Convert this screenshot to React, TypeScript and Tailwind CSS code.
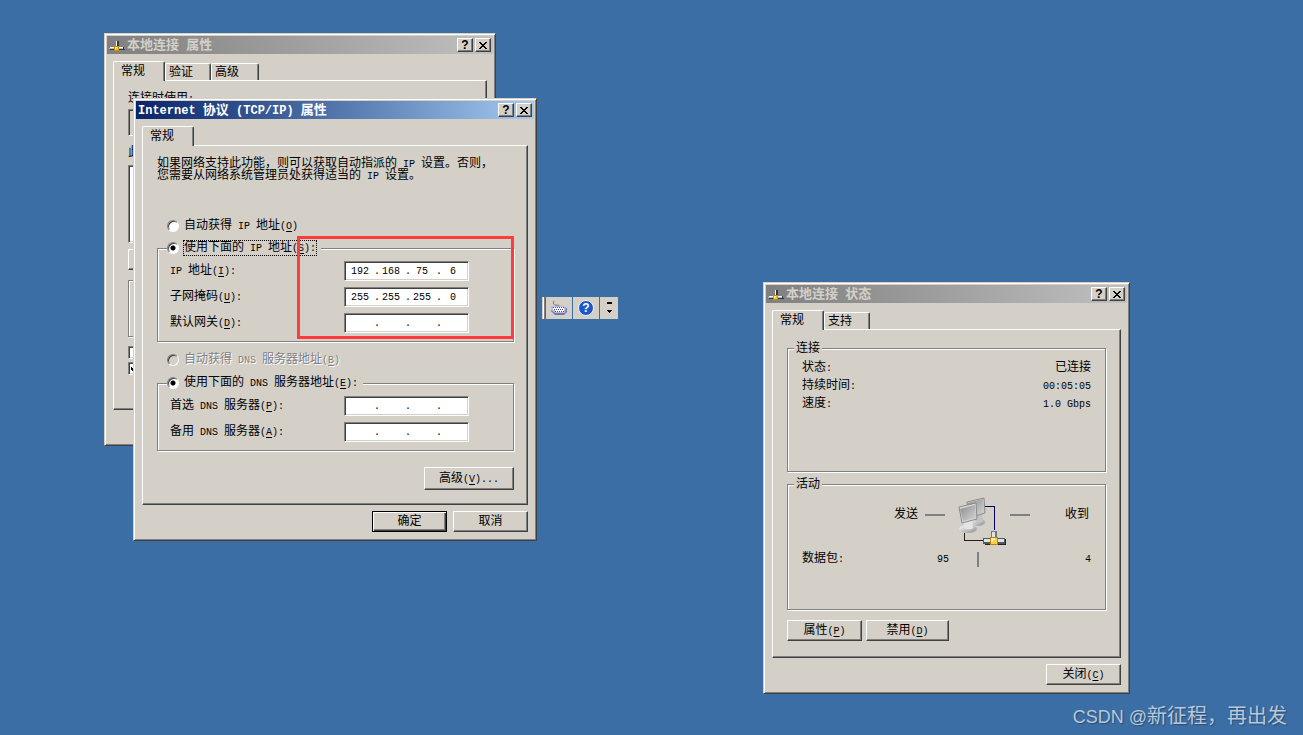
import { useState } from 'react';
import type { ReactNode } from 'react';
import clsx from 'clsx';

const RAISED =
  'bg-[#d4d0c8] border border-t-white border-l-white border-b-[#404040] border-r-[#404040] shadow-[inset_-1px_-1px_0_#808080]';
const SUNKEN =
  'border border-t-[#808080] border-l-[#808080] border-b-white border-r-white shadow-[inset_1px_1px_0_#404040,inset_-1px_-1px_0_#d4d0c8]';

type TextProps = {
  children: string;
  accel?: string;
  suffix?: string;
  latin?: string;
};

// latin runs are half the width of a chinese character
function Text({ children, accel, suffix = '', latin = 'text-[10px] leading-none' }: TextProps) {
  return (
    <span className="whitespace-pre">
      {children.split(/([\x20-\x7e]+)/).map((part, i) =>
        i % 2 ? (
          <span key={i} className={latin}>
            {part}
          </span>
        ) : (
          part
        ),
      )}
      {accel && (
        <span className={latin}>
          (<u className="underline-offset-2">{accel}</u>)
        </span>
      )}
      {suffix && <span className={latin}>{suffix}</span>}
    </span>
  );
}

function NetworkIcon() {
  return (
    <svg width="16" height="16" viewBox="0 0 16 16" shapeRendering="crispEdges" aria-hidden="true">
      <path d="M7 4h1v6H7z" fill="#f4f8f8" />
      <path d="M8 4h2v6H8z" fill="#303840" />
      <path d="M1 10h13v1H1z" fill="#f4f8f8" />
      <path d="M0 11h15v1H0z" fill="#b4bcc0" />
      <path d="M1 12h15v1H1zM14 10h1v3h-1z" fill="#303840" />
      <path d="M5 9h5v5H5z" fill="#c88a00" />
      <path d="M6 10h3v3H6z" fill="#f8c820" />
      <path d="M6 10h2v1H7v1H6z" fill="#fff0a0" />
    </svg>
  );
}

type WindowProps = {
  title: string;
  active?: boolean;
  className: string;
  children: ReactNode;
};

function Window({ title, active, className, children }: WindowProps) {
  return (
    <section
      aria-label={title}
      className={clsx(
        'absolute border border-t-[#d4d0c8] border-l-[#d4d0c8] border-b-[#404040] border-r-[#404040] bg-[#d4d0c8] p-0.5 shadow-[inset_1px_1px_0_#fff,inset_-1px_-1px_0_#808080]',
        className,
      )}
    >
      <header
        className={clsx(
          'flex h-[18px] items-center gap-0.5 px-0.5',
          active
            ? 'bg-linear-to-r from-[#0a246a] to-[#a6caf0] text-white'
            : 'bg-linear-to-r from-[#808080] to-[#c0c0c0] text-[#d4d0c8]',
        )}
      >
        {!active && <NetworkIcon />}
        <h2 className="flex-1 pt-0.5 text-[13px] leading-4 font-bold">
          <Text latin="text-[12px] leading-none">{title}</Text>
        </h2>
        <button
          type="button"
          aria-label="帮助"
          className={clsx(
            RAISED,
            'flex h-3.5 w-4 items-center justify-center font-["Liberation_Sans",sans-serif] text-[12px] leading-3 font-bold text-black',
          )}
        >
          ?
        </button>
        <button
          type="button"
          aria-label="关闭"
          className={clsx(RAISED, 'flex h-3.5 w-4 items-center justify-center')}
        >
          <svg width="8" height="7" viewBox="0 0 8 7" shapeRendering="crispEdges" aria-hidden="true">
            <path d="M0 0h2v1h1v1h2V1h1V0h2v1H7v1H6v1H5v1h1v1h1v1h1v1H6V6H5V5H3v1H2v1H0V6h1V5h1V4h1V3H2V2H1V1H0z" />
          </svg>
        </button>
      </header>
      <div className="px-1.5 pt-[7px] pb-1.5">{children}</div>
    </section>
  );
}

function Tabs({ names, widths }: { names: string[]; widths: string[] }) {
  return (
    <div role="tablist" className="relative z-10 -mb-px flex items-end">
      {names.map((name, i) => (
        <button
          key={name}
          type="button"
          role="tab"
          aria-selected={i === 0}
          className={clsx(
            'rounded-t-[2px] border-t border-r border-l border-t-white border-r-[#404040] border-l-white bg-[#d4d0c8] text-left leading-[18px] shadow-[inset_-1px_0_0_#808080]',
            widths[i],
            i === 0 ? 'h-5 pl-[7px]' : 'mb-px h-[17px] pl-[3px]',
          )}
        >
          {name}
        </button>
      ))}
    </div>
  );
}

function Panel({ className, children }: { className?: string; children: ReactNode }) {
  return (
    <div role="tabpanel" className={clsx(RAISED, 'px-3.5', className)}>
      {children}
    </div>
  );
}

function Group({ legend, className, children }: { legend: ReactNode; className?: string; children?: ReactNode }) {
  return (
    <fieldset
      className={clsx(
        'border border-[#808080] shadow-[1px_1px_0_#fff,inset_1px_1px_0_#fff]',
        className,
      )}
    >
      {legend}
      {children}
    </fieldset>
  );
}

function PushButton({ className, children }: { className?: string; children: ReactNode }) {
  return (
    <button type="button" className={clsx(RAISED, 'h-[21px] text-center leading-4', className)}>
      {children}
    </button>
  );
}

type RadioProps = {
  id: string;
  name: string;
  label: string;
  accel: string;
  suffix?: string;
  checked?: boolean;
  disabled?: boolean;
  focused?: boolean;
  onSelect?: () => void;
};

function Radio({ id, name, label, accel, suffix, checked, disabled, focused, onSelect }: RadioProps) {
  return (
    <div className="flex h-4 items-center gap-1">
      <input
        type="radio"
        id={id}
        name={name}
        checked={!!checked}
        disabled={disabled}
        onChange={onSelect}
        className="size-3 appearance-none rounded-full border border-t-[#808080] border-r-white border-b-white border-l-[#808080] bg-white shadow-[inset_1px_1px_0_#404040] checked:bg-[radial-gradient(circle,#000_2px,#fff_3px)] disabled:bg-[#d4d0c8]"
      />
      <label
        htmlFor={id}
        className={clsx(
          'border leading-3.5',
          focused ? 'border-dotted border-black' : 'border-transparent',
          disabled && 'text-[#808080] [text-shadow:1px_1px_0_#fff]',
        )}
      >
        <Text accel={accel} suffix={suffix}>
          {label}
        </Text>
      </label>
    </div>
  );
}

function AddressRow({ label, accel, value = ['', '', '', ''] }: { label: string; accel: string; value?: string[] }) {
  const [octets, setOctets] = useState(value);
  const id = `ip-${accel}`;
  return (
    <div className="flex h-5 items-center">
      <label htmlFor={id} className="w-[174px] leading-4">
        <Text accel={accel} suffix=":">
          {label}
        </Text>
      </label>
      <div className={clsx(SUNKEN, 'flex h-5 w-[125px] items-center bg-white pl-1 text-[10px]')}>
        {octets.map((octet, i) => (
          <div key={i} className="flex items-center">
            <input
              id={i === 0 ? id : undefined}
              aria-label={i === 0 ? undefined : `${label} ${i + 1}`}
              value={octet}
              maxLength={3}
              onChange={(e) => setOctets(octets.map((o, n) => (n === i ? e.target.value : o)))}
              className="h-4 w-[22px] bg-transparent text-center outline-none"
            />
            {i < 3 && <span className="w-[9px] text-right">.</span>}
          </div>
        ))}
      </div>
    </div>
  );
}

function ConnectionProperties() {
  return (
    <Window title="本地连接 属性" className="top-[33px] left-[104px] w-[392px]">
      <Tabs names={['常规', '验证', '高级']} widths={['w-[52px]', 'w-[46px]', 'w-12']} />
      <Panel className="pt-2.5 pb-[34px]">
        <p className="leading-4">
          <Text>连接时使用:</Text>
        </p>
        <div className={clsx(SUNKEN, 'mt-0.5 h-[27px]')} />
        <p className="mt-[9px] leading-4">此连接使用下列项目</p>
        <div className={clsx(SUNKEN, 'mt-1 h-[78px] bg-white')} />
        <button type="button" aria-label="安装" className={clsx(RAISED, 'mt-1.5 block h-[21px] w-[75px]')} />
        <Group legend={null} className="mt-2.5 h-[57px]" />
        <input
          type="checkbox"
          aria-label="显示图标"
          className={clsx(SUNKEN, 'mt-[9px] block size-[13px] appearance-none bg-white')}
        />
        <span className="relative mt-[3px] block size-[13px]">
          <input
            type="checkbox"
            aria-label="通知我"
            defaultChecked
            className={clsx(SUNKEN, 'block size-[13px] appearance-none bg-white')}
          />
          <svg className="absolute top-[3px] left-[3px]" width="7" height="7" shapeRendering="crispEdges" aria-hidden="true">
            <path d="M0 2h1v1h1v1h1V3h1V2h1V1h1V0h1v3H6v1H5v1H4v1H3v1H2V6H1V5H0z" />
          </svg>
        </span>
      </Panel>
      <div className="h-[27px]" />
    </Window>
  );
}

function TcpIpProperties() {
  const [auto, setAuto] = useState(false);
  return (
    <Window title="Internet 协议 (TCP/IP) 属性" active className="top-[98px] left-[133px] w-[404px]">
      <Tabs names={['常规']} widths={['w-[52px]']} />
      <Panel className="pt-3 pr-[13px] pb-3.5">
        <p className="leading-3">
          <Text>如果网络支持此功能，则可以获取自动指派的 IP 设置。否则，</Text>
          <br />
          <Text>您需要从网络系统管理员处获得适当的 IP 设置。</Text>
        </p>
        <div className="mt-9 pl-2.5">
          <Radio
            id="ip-auto"
            name="ip"
            label="自动获得 IP 地址"
            accel="O"
            checked={auto}
            onSelect={() => setAuto(true)}
          />
        </div>
        <Group
          className="mt-1.5 pb-2 pl-3"
          legend={
            <legend className="-ml-[3px] bg-[#d4d0c8] pr-1">
              <Radio
                id="ip-manual"
                name="ip"
                label="使用下面的 IP 地址"
                accel="S"
                suffix=":"
                checked={!auto}
                focused
                onSelect={() => setAuto(false)}
              />
            </legend>
          }
        >
          <div className="flex flex-col gap-1.5 pt-[5px]">
            <AddressRow label="IP 地址" accel="I" value={['192', '168', '75', '6']} />
            <AddressRow label="子网掩码" accel="U" value={['255', '255', '255', '0']} />
            <AddressRow label="默认网关" accel="D" />
          </div>
        </Group>
        <div className="mt-2.5 pl-2.5">
          <Radio id="dns-auto" name="dns" label="自动获得 DNS 服务器地址" accel="B" disabled />
        </div>
        <Group
          className="mt-[7px] pb-2 pl-3"
          legend={
            <legend className="-ml-[3px] bg-[#d4d0c8] pr-1">
              <Radio id="dns-manual" name="dns" label="使用下面的 DNS 服务器地址" accel="E" suffix=":" checked />
            </legend>
          }
        >
          <div className="flex flex-col gap-1.5 pt-[5px]">
            <AddressRow label="首选 DNS 服务器" accel="P" />
            <AddressRow label="备用 DNS 服务器" accel="A" />
          </div>
        </Group>
        <div className="mt-4 flex justify-end">
          <PushButton className="h-[23px] w-[90px]">
            <Text accel="V" suffix="...">
              高级
            </Text>
          </PushButton>
        </div>
      </Panel>
      <div className="mt-1.5 flex justify-end gap-1.5">
        <button
          type="button"
          className="h-[21px] w-[75px] border border-black bg-[#d4d0c8] text-center leading-4 shadow-[inset_1px_1px_0_#fff,inset_-1px_-1px_0_#404040,inset_-2px_-2px_0_#808080]"
        >
          确定
        </button>
        <PushButton className="w-[75px]">取消</PushButton>
      </div>
      {/* highlight over the address fields */}
      <div className="pointer-events-none absolute top-[137px] left-[163px] h-[103px] w-[217px] border-3 border-[#ff3b3b]" />
    </Window>
  );
}

function ComputersIcon() {
  return (
    <svg width="50" height="53" viewBox="0 0 50 53" aria-hidden="true">
      <defs>
        <linearGradient id="screen" x1="0" y1="0" x2="1" y2="1">
          <stop offset="0" stopColor="#8c8c8c" />
          <stop offset="1" stopColor="#d6d6d6" />
        </linearGradient>
        <linearGradient id="base" x1="0" y1="0" x2="1" y2="1">
          <stop offset="0" stopColor="#ffffff" />
          <stop offset="1" stopColor="#8a8a8a" />
        </linearGradient>
      </defs>
      <g shapeRendering="crispEdges">
        <path d="M27 11h10v24h-1V12h-9z" fill="#000060" />
        <path d="M6 38h1v7h18v1H6z" fill="#202020" />
      </g>
      <ellipse cx="20" cy="27" rx="7" ry="4" fill="url(#base)" />
      <path d="M17 18h7l1 8q-4 3-8 0z" fill="#c4c4c4" />
      <path d="M9 7l17-4 1 15-16 5z" fill="#cfcfcf" stroke="#8a8a8a" />
      <path d="M10 8l15-4 1 13-14 4z" fill="url(#screen)" />
      <ellipse cx="10" cy="34" rx="9" ry="4" fill="url(#base)" />
      <path d="M6 25h8l1 8q-4 3-9 0z" fill="#e4e4e4" />
      <path d="M1 12l17-4 1 16-15 4z" fill="#d8d8d8" stroke="#8a8a8a" />
      <path d="M2 14l15-4 1 13-13 3z" fill="url(#screen)" />
      <g shapeRendering="crispEdges">
        <path d="M33 36h6v8h-6z" fill="#707880" />
        <path d="M34 37h3v7h-3z" fill="#dce4e8" />
        <path d="M25 43h22v6H25z" fill="#505860" />
        <path d="M26 44h20v3H26z" fill="#dce4e8" />
        <path d="M27 49h21v1H27zM47 44h1v5h-1z" fill="#202428" />
        <path d="M32 42h8v8h-8z" fill="#c08000" />
        <path d="M33 43h6v6h-6z" fill="#ffd040" />
        <path d="M33 43h4v2h-2v2h-2z" fill="#fff0a8" />
      </g>
    </svg>
  );
}

const STATUS = [
  ['状态:', '已连接'],
  ['持续时间:', '00:05:05'],
  ['速度:', '1.0 Gbps'],
];

function ConnectionStatus() {
  return (
    <Window title="本地连接 状态" className="top-[282px] left-[763px] w-[367px]">
      <Tabs names={['常规', '支持']} widths={['w-[52px]', 'w-[46px]']} />
      <Panel className="pt-[9px] pb-4">
        <Group
          className="pr-3.5 pb-[58px] pl-3.5"
          legend={<legend className="-ml-2 bg-[#d4d0c8] px-0.5 pt-0.5 leading-4">连接</legend>}
        >
          <dl className="pt-0.5">
            {STATUS.map(([name, value]) => (
              <div key={name} className="flex h-[18px] justify-between leading-[18px]">
                <dt>
                  <Text>{name}</Text>
                </dt>
                <dd>
                  <Text>{value}</Text>
                </dd>
              </div>
            ))}
          </dl>
        </Group>
        <Group
          className="mt-[3px] px-3.5 pb-[42px]"
          legend={<legend className="-ml-2 bg-[#d4d0c8] px-0.5 pt-0.5 leading-4">活动</legend>}
        >
          <div className="flex pt-0.5 pl-[92px]">
            <span className="mt-3 leading-4">发送</span>
            <span className="mt-[19px] ml-[7px] h-0.5 w-5 bg-[#808080]" />
            <span className="ml-[13px]">
              <ComputersIcon />
            </span>
            <span className="mt-[19px] ml-0.5 h-0.5 w-5 bg-[#808080]" />
            <span className="mt-3 ml-[35px] leading-4">收到</span>
          </div>
          <div className="mt-[3px] flex h-4 items-center leading-4">
            <div className="flex w-[175px] justify-between pr-7">
              <Text>数据包:</Text>
              <Text>95</Text>
            </div>
            <span className="h-[15px] w-0.5 bg-[#808080]" />
            <div className="flex-1 text-right">
              <Text>4</Text>
            </div>
          </div>
        </Group>
        <div className="mt-2.5 flex gap-1">
          <PushButton className="w-[75px]">
            <Text accel="P">属性</Text>
          </PushButton>
          <PushButton className="w-[83px]">
            <Text accel="D">禁用</Text>
          </PushButton>
        </div>
      </Panel>
      <div className="mt-1.5 flex justify-end">
        <PushButton className="w-[75px]">
          <Text accel="C">关闭</Text>
        </PushButton>
      </div>
    </Window>
  );
}

function LanguageBar() {
  return (
    <div className="absolute top-[297px] left-[542px] flex h-[22px] gap-px">
      <span className="w-[3px] border-r border-l border-r-[#808080] border-l-[#d4d0c8] bg-white" />
      <button type="button" aria-label="键盘" className="flex w-[26px] items-center justify-center bg-[#d4d0c8]">
        <svg width="18" height="16" viewBox="0 0 18 16" aria-hidden="true">
          <path d="M4 1q-2 4 2 4t4 2" fill="none" stroke="#707888" />
          <path d="M1 7h13l3 1v4l-3 3H5l-4-4z" fill="#7078a8" />
          <path d="M1 6h13l2 2-1 5H5l-4-3z" fill="#b4b8ec" />
          <g shapeRendering="crispEdges" fill="#ffffff">
            <path d="M3 7h11v5H5V10H3z" />
            <path
              fill="#404888"
              d="M3 7h1v1H3zM5 7h1v1H5zM7 7h1v1H7zM9 7h1v1H9zM11 7h1v1h-1zM13 7h1v1h-1zM4 9h1v1H4zM6 9h1v1H6zM8 9h1v1H8zM10 9h1v1h-1zM12 9h1v1h-1zM5 11h1v1H5zM7 11h1v1H7zM9 11h1v1H9zM11 11h1v1h-1zM13 11h1v1h-1z"
            />
          </g>
        </svg>
      </button>
      <button type="button" aria-label="帮助" className="flex w-[26px] items-center justify-center bg-[#d4d0c8]">
        <span className="flex size-4 items-center justify-center rounded-full border border-[#eef4ff] bg-[#1c58c8] font-['Liberation_Sans',sans-serif] text-[12px] leading-3 font-bold text-white">
          ?
        </span>
      </button>
      <button type="button" aria-label="选项" className="flex w-[18px] items-center justify-center bg-[#d4d0c8]">
        <svg width="7" height="12" shapeRendering="crispEdges" aria-hidden="true">
          <path d="M1 0h5v2H1zM1 8h5v1H5v1H4v1H3v-1H2V9H1z" />
        </svg>
      </button>
    </div>
  );
}

export default function App() {
  return (
    <main className="relative min-h-screen w-full overflow-hidden bg-[#3a6ea5] font-['Liberation_Mono','Noto_Sans_CJK_SC',monospace] text-[12px] text-black">
      <ConnectionProperties />
      <TcpIpProperties />
      <LanguageBar />
      <ConnectionStatus />
      <p className="absolute right-4 bottom-0.5 font-['Liberation_Sans','Noto_Sans_CJK_SC',sans-serif] text-[20px] leading-8 text-[#b9c8da] [text-shadow:1px_1px_1px_#2a4a70]">
        <span className="text-[18px]">CSDN @</span>新征程，再出发
      </p>
    </main>
  );
}
